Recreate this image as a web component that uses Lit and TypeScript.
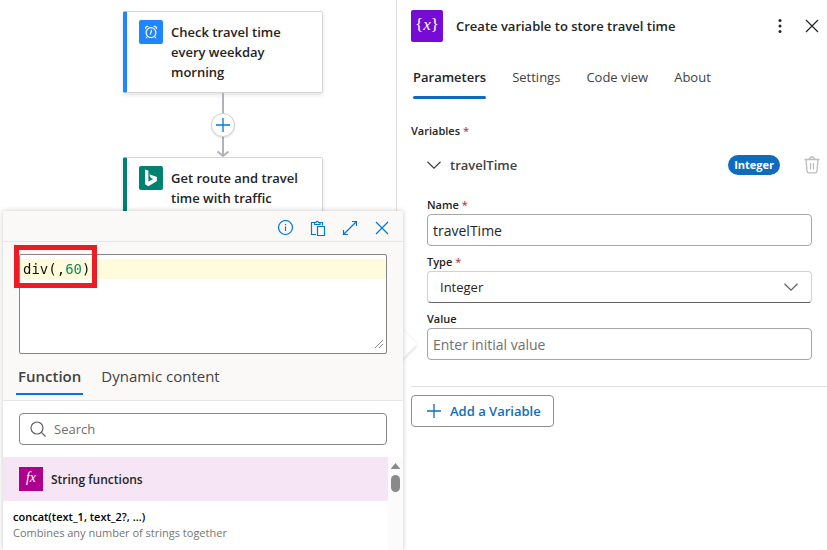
import { LitElement, html, css, svg } from "lit";
import { customElement, property, state } from "lit/decorators.js";
import { classMap } from "lit/directives/class-map.js";

const icons = {
  alarm: svg`<svg width="14" height="14" viewBox="0 0 14 14" fill="none" stroke="#fff" stroke-width="1.200"><circle cx="7" cy="7.600" r="4.900"/><path d="M7.600 4.800 7 7.800l-1 1.600M3 12l-1 1M11 12l1 1M1.600 3.800c-.4-1.600 1.200-2.900 2.700-2.200M12.400 3.800c.4-1.600-1.200-2.900-2.700-2.200"/></svg>`,
  bing: svg`<svg width="24" height="24" viewBox="0 0 24 24" fill="#fff"><path d="M6 3.500 9.400 4.700v10.900l4.800-2.600-2.400-1.100-1.500-3.600 7.700 2.700v3.900L9.400 20.200 6 18.200z"/></svg>`,
  info: svg`<svg width="16" height="16" viewBox="0 0 16 16" fill="none" stroke="currentColor" stroke-width="1.200"><circle cx="7.500" cy="7.500" r="7"/><path d="M7.500 6.500V11M7.500 4v1.300"/></svg>`,
  paste: svg`<svg width="16" height="16" viewBox="0 0 16 16" fill="none" stroke="currentColor" stroke-width="1.200"><path d="M6 14.500H1.500v-12H4.500M9.500 2.500h3V5.500M4.500 4.500v-2h1.500a1 1 0 0 1 2.500 0h1.500v2zM7.500 6.500h7v9h-7z"/></svg>`,
  expand: svg`<svg width="16" height="16" viewBox="0 0 16 16" fill="none" stroke="currentColor" stroke-width="1.200"><path d="M1.500 14.500l13-13M10 1.500h4.500V6M1.500 10v4.500H6"/></svg>`,
  close: svg`<svg width="14" height="14" viewBox="0 0 14 14" fill="none" stroke="currentColor" stroke-width="1.200"><path d="M1 1l12 12M13 1 1 13"/></svg>`,
  search: svg`<svg width="16" height="16" viewBox="0 0 16 16" fill="none" stroke="currentColor" stroke-width="1.200"><circle cx="7" cy="7" r="6"/><path d="M11.400 11.400 15.500 15.500"/></svg>`,
  more: svg`<svg width="4" height="14" viewBox="0 0 4 14" fill="currentColor"><circle cx="2" cy="1.600" r="1.500"/><circle cx="2" cy="7" r="1.500"/><circle cx="2" cy="12.400" r="1.500"/></svg>`,
  chevron: svg`<svg width="14" height="8" viewBox="0 0 14 8" fill="none" stroke="currentColor" stroke-width="1.200"><path d="M.5.8 7 7.200 13.500.8"/></svg>`,
  trash: svg`<svg width="16" height="18" viewBox="0 0 16 18" fill="none" stroke="currentColor" stroke-width="1.300"><path d="M.5 3.500h15M5.500 3.500a2.500 2.500 0 0 1 5 0M2 3.500l1 11.500a2 2 0 0 0 2 1.900h6a2 2 0 0 0 2-1.900l1-11.500M6.500 7v6.500M9.500 7v6.500"/></svg>`,
  plus: svg`<svg width="14" height="14" viewBox="0 0 14 14" fill="none" stroke="currentColor" stroke-width="1.300"><path d="M7 0v14M0 7h14"/></svg>`,
  grip: svg`<svg width="10" height="10" viewBox="0 0 10 10" fill="none" stroke="#8a8a8a"><path d="M1 9 9 1M5 9l4-4"/></svg>`,
};

const base = css`
  *, *::before, *::after { box-sizing: border-box; }
  button, input, select, textarea { font: inherit; color: inherit; margin: 0; }
  button { background: none; border: 0; padding: 0; cursor: pointer; }
  svg { display: block; flex: none; }
  h2, h3, p { margin: 0; font: inherit; }
`;

@customElement("flow-card")
class FlowCard extends LitElement {
  @property() kind = "timer";
  @property() label = "";

  static styles = [base, css`
    :host { display: block; width: 200px; }
    .card { display: flex; gap: 8px; padding: 8px 16px 10px 12px; background: #fff; border: 1px solid #d6d6d6; border-left: 4px solid #1e86ff; border-radius: 2px; box-shadow: 0 2px 4px #0000001f; }
    .bing { border-left-color: #008272; }
    .icon { display: grid; place-items: center; flex: none; width: 24px; height: 24px; border-radius: 2px; background: #1e86ff; }
    .bing .icon { background: #008272; }
    .label { padding: 2px 0 0; font-weight: 600; font-size: 13px; line-height: 20px; }
  `];

  render() {
    const bing = this.kind === "bing";
    return html`<article class=${classMap({ card: true, bing })}>
      <span class="icon">${bing ? icons.bing : icons.alarm}</span>
      <h3 class="label">${this.label}</h3>
    </article>`;
  }
}

@customElement("expression-popup")
class ExpressionPopup extends LitElement {
  @state() private tab = "Function";

  static styles = [base, css`
    :host { display: flex; flex-direction: column; background: #faf9f8; box-shadow: 0 0 5px #00000038; }
    .beak { position: absolute; right: -10px; top: 123px; width: 20px; height: 20px; background: #fff; transform: rotate(45deg); box-shadow: 1px 1px 4px #00000026; z-index: -1; }
    .tools { display: flex; justify-content: flex-end; align-items: center; gap: 16px; height: 31px; padding: 3px 13px 0 0; border-bottom: 1px solid #e6e6e6; color: #0078d4; }
    .tool { display: grid; place-items: center; width: 16px; height: 16px; }
    .editor { position: relative; height: 100px; margin: 12px 16px 0; padding: 4px 0; background: #fff; border: 1px solid #868686; border-radius: 2px; }
    .line { background: #fffbdb; height: 20px; }
    .code { display: block; width: 100%; height: 90px; padding: 0 3px; border: 0; outline: 0; resize: none; overflow: hidden; font: 14px/20px "DejaVu Sans Mono", monospace; color: #111; -webkit-text-fill-color: transparent; background: linear-gradient(to right, #111 45px, #098658 45px 62px, #111 62px); -webkit-background-clip: text; background-clip: text; }
    .grip { position: absolute; right: 2px; bottom: 4px; }
    .mark { position: absolute; left: -6px; top: -10px; width: 83px; height: 43px; border: 5px solid #ed1c24; pointer-events: none; }
    .tabs { display: flex; align-items: flex-end; gap: 16px; height: 47px; padding: 0 13px 5px; border-bottom: 1px solid #e6e6e6; font-size: 15px; color: #424242; }
    .tab { height: 32px; padding: 0 2px 4px; border-bottom: 2px solid transparent; }
    .on { font-weight: 600; border-bottom-color: #0078d4; }
    .body { display: flex; flex-direction: column; flex: 1; min-height: 0; background: #fff; }
    .search { display: flex; align-items: center; gap: 8px; height: 32px; margin: 12px 16px; padding: 0 10px; border: 1px solid #868686; border-radius: 4px; color: #616161; }
    .query { flex: 1; min-width: 0; border: 0; outline: 0; padding: 0; background: none; font-size: 13px; }
    .query::placeholder { color: #707070; opacity: 1; }
    .scroll { display: flex; flex: 1; min-height: 0; }
    .list { flex: 1; min-width: 0; }
    .group { display: flex; align-items: center; gap: 8px; height: 44px; padding: 0 16px; background: #f6e6f5; font-weight: 600; font-size: 12px; }
    .fx { width: 24px; height: 24px; background: #ad008c; color: #fff; font: italic 14px/22px "Liberation Serif", serif; text-align: center; }
    .fn { display: block; width: 100%; padding: 8px 10px; text-align: left; font-size: 11px; line-height: 16px; }
    .sig { display: block; color: #000; font-weight: 600; }
    .desc { display: block; color: #757575; }
    .bar { display: flex; flex-direction: column; align-items: center; gap: 6px; width: 15px; padding-top: 6px; background: #fbfbfb; }
    .thumb { width: 9px; height: 17px; border-radius: 5px; background: #8a8a8a; }
  `];

  render() {
    return html`
      <span class="beak"></span>
      <header class="tools">
        ${[["Information", icons.info], ["Paste", icons.paste], ["Expand", icons.expand], ["Close", icons.close]].map(
          ([name, icon]) => html`<button class="tool" aria-label=${name as string}>${icon}</button>`)}
      </header>
      <div class="editor">
        <div class="line"><textarea class="code" aria-label="Expression" spellcheck="false" .value=${"div(,60)"}></textarea></div>
        <span class="grip">${icons.grip}</span>
        <span class="mark"></span>
      </div>
      <nav class="tabs">
        ${["Function", "Dynamic content"].map((name) => html`
          <button class=${classMap({ tab: true, on: this.tab === name })} @click=${() => (this.tab = name)}>${name}</button>`)}
      </nav>
      <div class="body">
        <label class="search">${icons.search}<input class="query" type="text" aria-label="Search" placeholder="Search"></label>
        <div class="scroll">
          <div class="list">
            <h3 class="group"><span class="fx">fx</span>String functions</h3>
            <button class="fn">
              <span class="sig">concat(text_1, text_2?, ...)</span>
              <span class="desc">Combines any number of strings together</span>
            </button>
          </div>
          <div class="bar">
            <svg width="9" height="6" viewBox="0 0 9 6" fill="#8a8a8a"><path d="M4.500 0 9 5.500Q9 6 8.500 6h-8Q0 6 0 5.500z"/></svg>
            <span class="thumb"></span>
          </div>
        </div>
      </div>`;
  }
}

@customElement("variable-panel")
class VariablePanel extends LitElement {
  @state() private tab = "Parameters";

  static styles = [base, css`
    :host { display: block; padding: 10px 0 0 14px; border-left: 1px solid #e0e0e0; background: #fff; font-size: 13px; }
    .head { display: flex; align-items: center; height: 32px; padding-right: 7px; }
    .logo { width: 32px; height: 32px; border-radius: 2px; background: #770bd6; color: #fff; font: italic 17px/30px "Liberation Serif", serif; text-align: center; }
    .brace { font-style: normal; }
    .title { flex: 1; padding-left: 13px; font-weight: 600; }
    .act { display: grid; place-items: center; width: 16px; height: 16px; margin-left: 16px; }
    .tabs { display: flex; gap: 26px; margin-top: 25px; padding-left: 2px; color: #424242; }
    .tab { height: 32px; padding-bottom: 9px; line-height: 20px; border-bottom: 3px solid transparent; position: relative; }
    .on { color: #242424; font-weight: 600; }
    .on::after { content: ""; position: absolute; left: 0; right: 0; bottom: -3px; height: 3px; border-radius: 2px; background: #0f6cbd; }
    .label { display: block; margin-bottom: 1px; font-size: 11px; font-weight: 600; line-height: 16px; }
    .req { color: #a4262c; font-weight: 400; }
    .section { margin-top: 24px; }
    .row { display: flex; align-items: center; height: 20px; margin-top: 16px; padding: 0 7px 0 16px; color: #424242; }
    .toggle { display: flex; align-items: center; gap: 9px; flex: 1; font-weight: 600; }
    .badge { padding: 0 6px; border-radius: 10px; background: #0f6cbd; color: #fff; font-size: 11px; font-weight: 700; line-height: 20px; }
    .trash { margin-left: 24px; color: #bdbdbd; }
    .fields { display: flex; flex-direction: column; gap: 8px; margin-top: 22px; padding: 0 15px 0 16px; }
    .box { display: block; width: 100%; height: 32px; padding: 0 5px; border: 1px solid #a6a6a6; border-radius: 4px; background: #fff; font-size: 14px; outline: 0; }
    .box::placeholder { color: #707070; opacity: 1; }
    .pick { position: relative; }
    .select { appearance: none; padding: 0 32px 0 12px; border-color: #d1d1d1; border-bottom-color: #616161; font-size: 13px; }
    .arrow { position: absolute; right: 14px; top: 12px; color: #616161; pointer-events: none; }
    .foot { margin-top: 26px; padding-top: 8px; border-top: 1px solid #e0e0e0; }
    .add { display: flex; align-items: center; gap: 9px; height: 32px; padding: 0 12px 0 15px; border: 1px solid #8f8f8f; border-radius: 4px; color: #0f6cbd; font-weight: 600; }
  `];

  render() {
    return html`
      <header class="head">
        <span class="logo"><span class="brace">{</span>x<span class="brace">}</span></span>
        <h2 class="title">Create variable to store travel time</h2>
        <button class="act" aria-label="More">${icons.more}</button>
        <button class="act" aria-label="Close">${icons.close}</button>
      </header>
      <nav class="tabs">
        ${["Parameters", "Settings", "Code view", "About"].map((name) => html`
          <button class=${classMap({ tab: true, on: this.tab === name })} @click=${() => (this.tab = name)}>${name}</button>`)}
      </nav>
      <section class="section">
        <h3 class="label">Variables <span class="req">*</span></h3>
        <div class="row">
          <button class="toggle" aria-expanded="true">${icons.chevron}travelTime</button>
          <span class="badge">Integer</span>
          <button class="trash" aria-label="Delete">${icons.trash}</button>
        </div>
        <div class="fields">
          <div>
            <label class="label" for="name">Name <span class="req">*</span></label>
            <input class="box" id="name" type="text" value="travelTime">
          </div>
          <div>
            <label class="label" for="type">Type <span class="req">*</span></label>
            <div class="pick">
              <select class="box select" id="type"><option>Integer</option></select>
              <span class="arrow">${icons.chevron}</span>
            </div>
          </div>
          <div>
            <label class="label" for="value">Value</label>
            <input class="box" id="value" type="text" placeholder="Enter initial value">
          </div>
        </div>
        <footer class="foot"><button class="add">${icons.plus}Add a Variable</button></footer>
      </section>`;
  }
}

@customElement("app-root")
class AppRoot extends LitElement {
  static styles = [base, css`
    :host { display: grid; grid-template-columns: minmax(0, 396fr) minmax(0, 431fr); height: 100vh; overflow: hidden; background: #fff; color: #242424; font-family: "Open Sans", "Noto Sans", sans-serif; }
    .canvas { position: relative; z-index: 1; display: flex; flex-direction: column; align-items: center; min-width: 0; padding: 11px 0 0 50px; }
    .link { position: relative; display: grid; place-items: center; width: 24px; height: 64px; }
    .wire { position: absolute; left: 0; top: 0; }
    .add { position: relative; display: grid; place-items: center; width: 24px; height: 24px; border: 1px solid #d0d0d0; border-radius: 50%; background: #fff; color: #0078d4; box-shadow: 0 1px 2px #0000001f; }
    .popup { position: absolute; left: 3px; right: -7px; top: 211px; bottom: 0; }
  `];

  render() {
    return html`
      <main class="canvas">
        <flow-card kind="timer" label="Check travel time every weekday morning"></flow-card>
        <div class="link">
          <svg class="wire" width="24" height="64" viewBox="0 0 24 64" fill="none" stroke="#b1b1b7" stroke-width="2"><path d="M12 0v63M6.500 58.500 12 63l5.500-4.500"/></svg>
          <button class="add" aria-label="Add an action">${icons.plus}</button>
        </div>
        <flow-card kind="bing" label="Get route and travel time with traffic"></flow-card>
        <expression-popup class="popup"></expression-popup>
      </main>
      <variable-panel></variable-panel>`;
  }
}
